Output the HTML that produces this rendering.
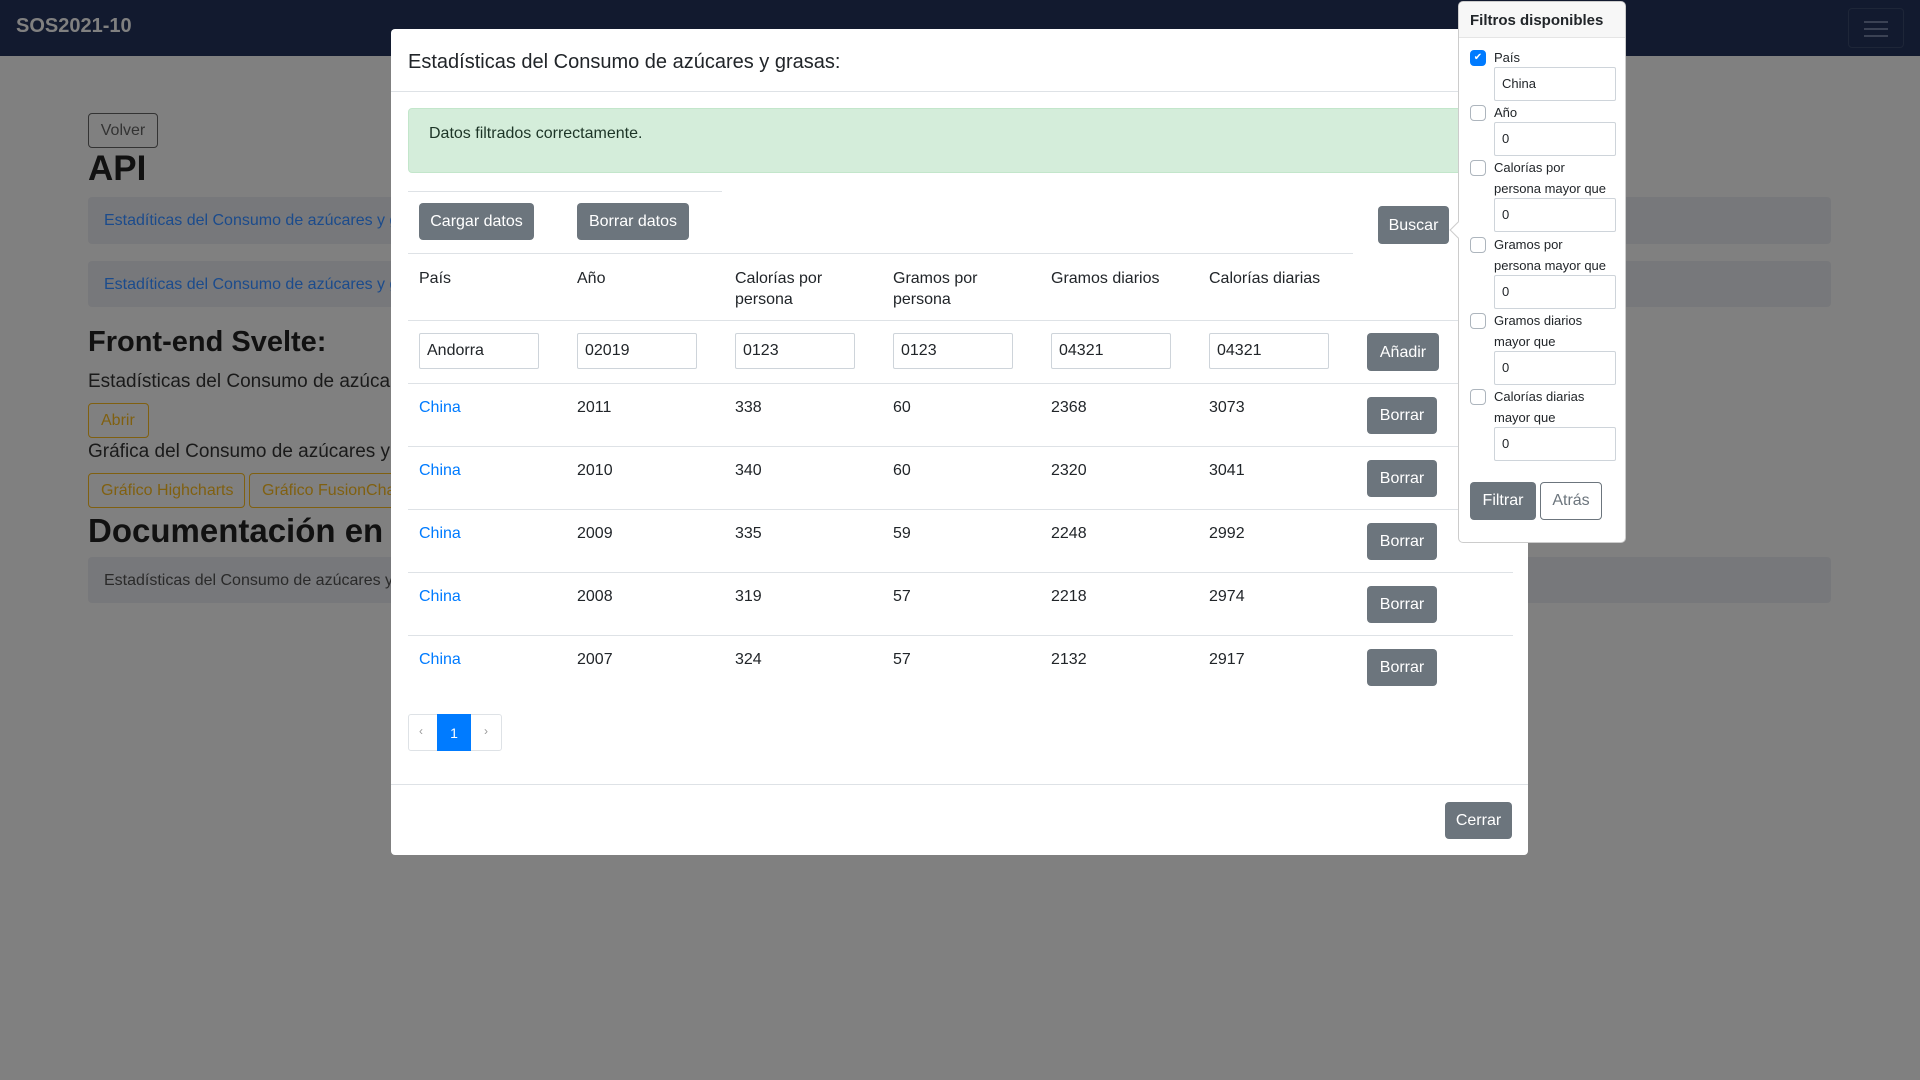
<!DOCTYPE html>
<html><head><meta charset="utf-8"><style>
*{box-sizing:border-box;margin:0;padding:0}
body{width:1920px;height:1080px;position:relative;overflow:hidden;background:#808080;font-family:"Liberation Sans",sans-serif;color:#212529;font-size:16px}
.a{position:absolute;white-space:nowrap}
.nav{left:0;top:0;width:1920px;height:56px;background:#121a2f}
.brand{left:16px;top:15px;color:#808080;font-size:20px;font-weight:bold}
.ham{left:1848px;top:8px;width:56px;height:40px;border:1px solid #1e2638;border-radius:4px}
.ham i{position:absolute;left:15px;width:24px;height:2px;background:#3b4254}
.bg{color:#111}
.box{background:#77787b;border-radius:4px}
.lnk{color:#1b4b8c;font-size:16px}
.obtn{border:1px solid #806010;border-radius:4px;color:#806010;font-size:16px;padding:0 12px;line-height:33px;height:35px;overflow:hidden}
.modal{left:391px;top:29px;width:1137px;height:826px;background:#fff;border-radius:4px}
.btn{background:#6c757d;color:#fff;border-radius:4px;font-size:16px;text-align:center}
.inp{border:1px solid #ced4da;border-radius:2px;height:36px;width:120px;padding:0 7px;line-height:34px;font-size:16px;background:#fff}
.hl{height:1px;background:#dee2e6}
.china{color:#007bff}
.pop{left:1458px;top:1px;width:168px;height:542px;background:#fff;border:1px solid #ccc;border-radius:5px}
.cb{left:11px;width:16px;height:16px;border:1px solid #adb5bd;border-radius:4px;background:#fff}
.pl{left:35px;font-size:13px;line-height:21px}
.pi{left:35px;width:122px;height:34px;border:1px solid #ced4da;border-radius:2px;font-size:13px;padding-left:7px;line-height:32px}
.m div.t{top:0}
</style></head><body>
<div class="a nav"></div>
<div class="a brand">SOS2021-10</div>
<div class="a ham"><i style="top:12px"></i><i style="top:19px"></i><i style="top:26px"></i></div>

<div class="a" style="left:88px;top:113px;width:70px;height:35px;border:1px solid #333;border-radius:4px;color:#333;font-size:16px;text-align:center;line-height:33px">Volver</div>
<div class="a bg" style="left:88px;top:149px;font-size:35px;font-weight:bold">API</div>
<div class="a box" style="left:88px;top:197px;width:1743px;height:47px"></div>
<div class="a lnk" style="left:104px;top:212px">Estadíticas del Consumo de azúcares y grasas</div>
<div class="a box" style="left:88px;top:261px;width:1743px;height:46px"></div>
<div class="a lnk" style="left:104px;top:276px">Estadíticas del Consumo de azúcares y grasas</div>
<div class="a bg" style="left:88px;top:326px;font-size:29px;font-weight:bold">Front-end Svelte:</div>
<div class="a bg" style="left:88px;top:371px;font-size:19px;color:#1a1a1a">Estadísticas del Consumo de azúcares y grasas</div>
<div class="a obtn" style="left:88px;top:403px;width:61px">Abrir</div>
<div class="a bg" style="left:88px;top:441px;font-size:19px;color:#1a1a1a">Gráfica del Consumo de azúcares y grasas</div>
<div class="a obtn" style="left:88px;top:473px;width:157px">Gráfico Highcharts</div>
<div class="a obtn" style="left:249px;top:473px;width:170px">Gráfico FusionCharts</div>
<div class="a bg" style="left:88px;top:512px;font-size:33px;font-weight:bold">Documentación en Postman</div>
<div class="a box" style="left:88px;top:557px;width:1743px;height:46px"></div>
<div class="a" style="left:104px;top:572px;color:#2a2a2a">Estadísticas del Consumo de azúcares y grasas</div>

<div class="a modal">
 <div class="a" style="left:17px;top:22px;font-size:20px;font-weight:500">Estadísticas del Consumo de azúcares y grasas:</div>
 <div class="a hl" style="left:0;top:62px;width:1137px"></div>
 <div class="a" style="left:17px;top:79px;width:1104px;height:65px;background:#d4edda;border:1px solid #c3e6cb;border-radius:4px"></div>
 <div class="a" style="left:38px;top:96px;color:#1d3527">Datos filtrados correctamente.</div>
 <div class="a hl" style="left:17px;top:162px;width:314px"></div>
 <div class="a btn" style="left:28px;top:174px;width:115px;height:37px;line-height:38px">Cargar datos</div>
 <div class="a btn" style="left:186px;top:174px;width:112px;height:37px;line-height:38px">Borrar datos</div>
 <div class="a btn" style="left:987px;top:177px;width:71px;height:38px;line-height:39px">Buscar</div>
 <div class="a hl" style="left:17px;top:224px;width:945px"></div>
 <div class="a" style="left:28px;top:239px;line-height:21px">País</div>
 <div class="a" style="left:186px;top:239px;line-height:21px">Año</div>
 <div class="a" style="left:344px;top:239px;line-height:21px">Calorías por<br>persona</div>
 <div class="a" style="left:502px;top:239px;line-height:21px">Gramos por<br>persona</div>
 <div class="a" style="left:660px;top:239px;line-height:21px">Gramos diarios</div>
 <div class="a" style="left:818px;top:239px;line-height:21px">Calorías diarias</div>
 <div class="a hl" style="left:17px;top:291px;width:1105px"></div>
 <div class="a inp" style="left:28px;top:304px">Andorra</div>
 <div class="a inp" style="left:186px;top:304px">02019</div>
 <div class="a inp" style="left:344px;top:304px">0123</div>
 <div class="a inp" style="left:502px;top:304px">0123</div>
 <div class="a inp" style="left:660px;top:304px">04321</div>
 <div class="a inp" style="left:818px;top:304px">04321</div>
 <div class="a btn" style="left:976px;top:304px;width:72px;height:38px;line-height:39px">Añadir</div>
 <div class="a hl" style="left:17px;top:354px;width:1105px"></div>
 <div class="a china" style="left:28px;top:370px">China</div><div class="a" style="left:186px;top:370px">2011</div><div class="a" style="left:344px;top:370px">338</div><div class="a" style="left:502px;top:370px">60</div><div class="a" style="left:660px;top:370px">2368</div><div class="a" style="left:818px;top:370px">3073</div>
 <div class="a btn" style="left:976px;top:368px;width:70px;height:37px;line-height:38px">Borrar</div>
 <div class="a hl" style="left:17px;top:417px;width:1105px"></div>
 <div class="a china" style="left:28px;top:433px">China</div><div class="a" style="left:186px;top:433px">2010</div><div class="a" style="left:344px;top:433px">340</div><div class="a" style="left:502px;top:433px">60</div><div class="a" style="left:660px;top:433px">2320</div><div class="a" style="left:818px;top:433px">3041</div>
 <div class="a btn" style="left:976px;top:431px;width:70px;height:37px;line-height:38px">Borrar</div>
 <div class="a hl" style="left:17px;top:480px;width:1105px"></div>
 <div class="a china" style="left:28px;top:496px">China</div><div class="a" style="left:186px;top:496px">2009</div><div class="a" style="left:344px;top:496px">335</div><div class="a" style="left:502px;top:496px">59</div><div class="a" style="left:660px;top:496px">2248</div><div class="a" style="left:818px;top:496px">2992</div>
 <div class="a btn" style="left:976px;top:494px;width:70px;height:37px;line-height:38px">Borrar</div>
 <div class="a hl" style="left:17px;top:543px;width:1105px"></div>
 <div class="a china" style="left:28px;top:559px">China</div><div class="a" style="left:186px;top:559px">2008</div><div class="a" style="left:344px;top:559px">319</div><div class="a" style="left:502px;top:559px">57</div><div class="a" style="left:660px;top:559px">2218</div><div class="a" style="left:818px;top:559px">2974</div>
 <div class="a btn" style="left:976px;top:557px;width:70px;height:37px;line-height:38px">Borrar</div>
 <div class="a hl" style="left:17px;top:606px;width:1105px"></div>
 <div class="a china" style="left:28px;top:622px">China</div><div class="a" style="left:186px;top:622px">2007</div><div class="a" style="left:344px;top:622px">324</div><div class="a" style="left:502px;top:622px">57</div><div class="a" style="left:660px;top:622px">2132</div><div class="a" style="left:818px;top:622px">2917</div>
 <div class="a btn" style="left:976px;top:620px;width:70px;height:37px;line-height:38px">Borrar</div>
 <div class="a" style="left:17px;top:685px;width:94px;height:37px;border:1px solid #dee2e6;border-radius:3px"></div>
 <div class="a" style="left:28px;top:695px;font-size:12px;color:#999">‹</div>
 <div class="a" style="left:46px;top:685px;width:34px;height:37px;background:#007bff;color:#fff;text-align:center;line-height:38px;font-size:14px">1</div>
 <div class="a" style="left:93px;top:695px;font-size:12px;color:#999">›</div>
 <div class="a hl" style="left:0;top:755px;width:1137px"></div>
 <div class="a btn" style="left:1054px;top:773px;width:67px;height:37px;line-height:38px">Cerrar</div>
</div>

<div class="a pop">
 <div class="a" style="left:-7px;top:222px;width:12px;height:12px;background:#fff;border-left:1px solid #ccc;border-bottom:1px solid #ccc;transform:rotate(45deg)"></div>
 <div class="a" style="left:0;top:0;width:166px;height:36px;background:#f7f7f7;border-bottom:1px solid #e5e5e5;border-radius:5px 5px 0 0"></div>
 <div class="a" style="left:11px;top:10px;font-size:15px;font-weight:bold">Filtros disponibles</div>
 <div class="a cb" style="top:48px;background:#007bff;border-color:#007bff;color:#fff;font-size:10px;text-align:center;line-height:14px">✔</div>
 <div class="a pl" style="top:45px">País</div>
 <div class="a pi" style="top:65px">China</div>
 <div class="a cb" style="top:103px"></div><div class="a pl" style="top:100px">Año</div>
 <div class="a pi" style="top:120px">0</div>
 <div class="a cb" style="top:158px"></div><div class="a pl" style="top:155px">Calorías por<br>persona mayor que</div>
 <div class="a pi" style="top:196px">0</div>
 <div class="a cb" style="top:235px"></div><div class="a pl" style="top:232px">Gramos por<br>persona mayor que</div>
 <div class="a pi" style="top:273px">0</div>
 <div class="a cb" style="top:311px"></div><div class="a pl" style="top:308px">Gramos diarios<br>mayor que</div>
 <div class="a pi" style="top:349px">0</div>
 <div class="a cb" style="top:387px"></div><div class="a pl" style="top:384px">Calorías diarias<br>mayor que</div>
 <div class="a pi" style="top:425px">0</div>
 <div class="a btn" style="left:11px;top:480px;width:66px;height:38px;line-height:38px">Filtrar</div>
 <div class="a" style="left:81px;top:480px;width:62px;height:38px;line-height:36px;border:1px solid #6c757d;border-radius:4px;color:#6c757d;text-align:center">Atrás</div>
</div>
</body></html>
